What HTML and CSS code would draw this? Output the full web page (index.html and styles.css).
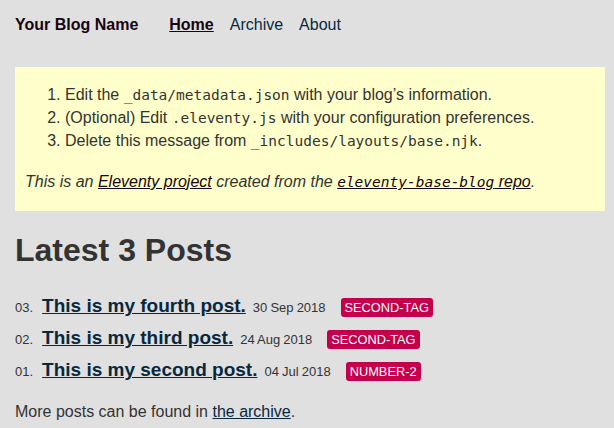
FILE: index.html
```html
<!DOCTYPE html>
<html lang="en">
<head>
<meta charset="utf-8">
<title>Your Blog Name</title>
<link rel="stylesheet" href="styles.css">
</head>
<body>
<header class="site-header">
  <h1 class="home"><a href="#" class="home-link">Your Blog Name</a></h1>
  <ul class="nav">
    <li class="nav-item nav-item-active"><a href="#" class="nav-link">Home</a></li>
    <li class="nav-item"><a href="#" class="nav-link">Archive</a></li>
    <li class="nav-item"><a href="#" class="nav-link">About</a></li>
  </ul>
</header>
<main class="main">
  <div class="warning">
    <ol class="steps">
      <li>Edit the <code class="code">_data/metadata.json</code> with your blog’s information.</li>
      <li>(Optional) Edit <code class="code">.eleventy.js</code> with your configuration preferences.</li>
      <li>Delete this message from <code class="code">_includes/layouts/base.njk</code>.</li>
    </ol>
    <p class="note"><em>This is an <a href="#" class="note-link">Eleventy project</a> created from the <a href="#" class="note-link"><code class="code">eleventy-base-blog</code> repo</a>.</em></p>
  </div>
  <h1 class="page-title">Latest 3 Posts</h1>
  <ol class="postlist">
    <li class="postlist-item">
      <span class="postlist-num">03.</span>
      <a href="#" class="postlist-link">This is my fourth post.</a>
      <time class="postlist-date">30 Sep 2018</time>
      <a href="#" class="tag">second-tag</a>
    </li>
    <li class="postlist-item">
      <span class="postlist-num">02.</span>
      <a href="#" class="postlist-link">This is my third post.</a>
      <time class="postlist-date">24 Aug 2018</time>
      <a href="#" class="tag">second-tag</a>
    </li>
    <li class="postlist-item">
      <span class="postlist-num">01.</span>
      <a href="#" class="postlist-link">This is my second post.</a>
      <time class="postlist-date">04 Jul 2018</time>
      <a href="#" class="tag">number-2</a>
    </li>
  </ol>
  <p class="more">More posts can be found in <a href="#" class="more-link">the archive</a>.</p>
</main>
</body>
</html>
```

FILE: styles.css
```css
* { box-sizing: border-box; }

html, body {
  margin: 0;
  padding: 0;
  background: #e0e0e0;
  color: #333;
  font-family: "Liberation Sans", Arial, sans-serif;
  font-size: 16px;
}

.site-header {
  display: flex;
  align-items: baseline;
  padding: 16px 0 17px 15px;
  line-height: 18px;
}

.home {
  margin: 0;
  font-size: 16px;
  font-weight: 700;
}

.home-link {
  color: #17050f;
  text-decoration: none;
}

.nav {
  display: flex;
  gap: 16px;
  margin: 0 0 0 31px;
  padding: 0;
  list-style: none;
}

.nav-link {
  color: #082840;
  text-decoration: none;
}

.nav-item-active .nav-link {
  color: #17050f;
  font-weight: 700;
  text-decoration: underline;
}

.main {
  padding: 16px 9px 0 15px;
}

.warning {
  background: #ffffcc;
  padding: 16px 10px;
}

.steps {
  margin: 0 0 17px;
  padding-left: 40px;
  line-height: 23px;
}

.code {
  font-family: "DejaVu Sans Mono", "Liberation Mono", monospace;
  font-size: 14.5px;
  line-height: 1;
}

.note {
  margin: 0;
  line-height: 26px;
}

.note-link {
  color: #17050f;
}

.page-title {
  margin: 21px 0;
  font-size: 32px;
  line-height: 37px;
  font-weight: 700;
  color: #333;
}

.postlist {
  margin: 0 0 14px;
  padding: 0;
  list-style: none;
}

.postlist-item {
  display: flex;
  align-items: baseline;
  height: 32px;
}

.postlist-num {
  font-size: 13px;
  color: #333;
}

.postlist-link {
  margin-left: 9px;
  font-size: 19px;
  font-weight: 700;
  line-height: 32px;
  color: #082840;
}

.postlist-date {
  margin-left: 7px;
  font-size: 13px;
  word-spacing: -0.5px;
  color: #333;
}

.tag {
  margin-left: 15px;
  padding: 2px 4px;
  font-size: 12.8px;
  text-transform: uppercase;
  text-decoration: none;
  color: #fff;
  background: #c5004a;
  border-radius: 3px;
}

.more {
  margin: 0;
  line-height: 23.2px;
}

.more-link {
  color: #082840;
}
```
